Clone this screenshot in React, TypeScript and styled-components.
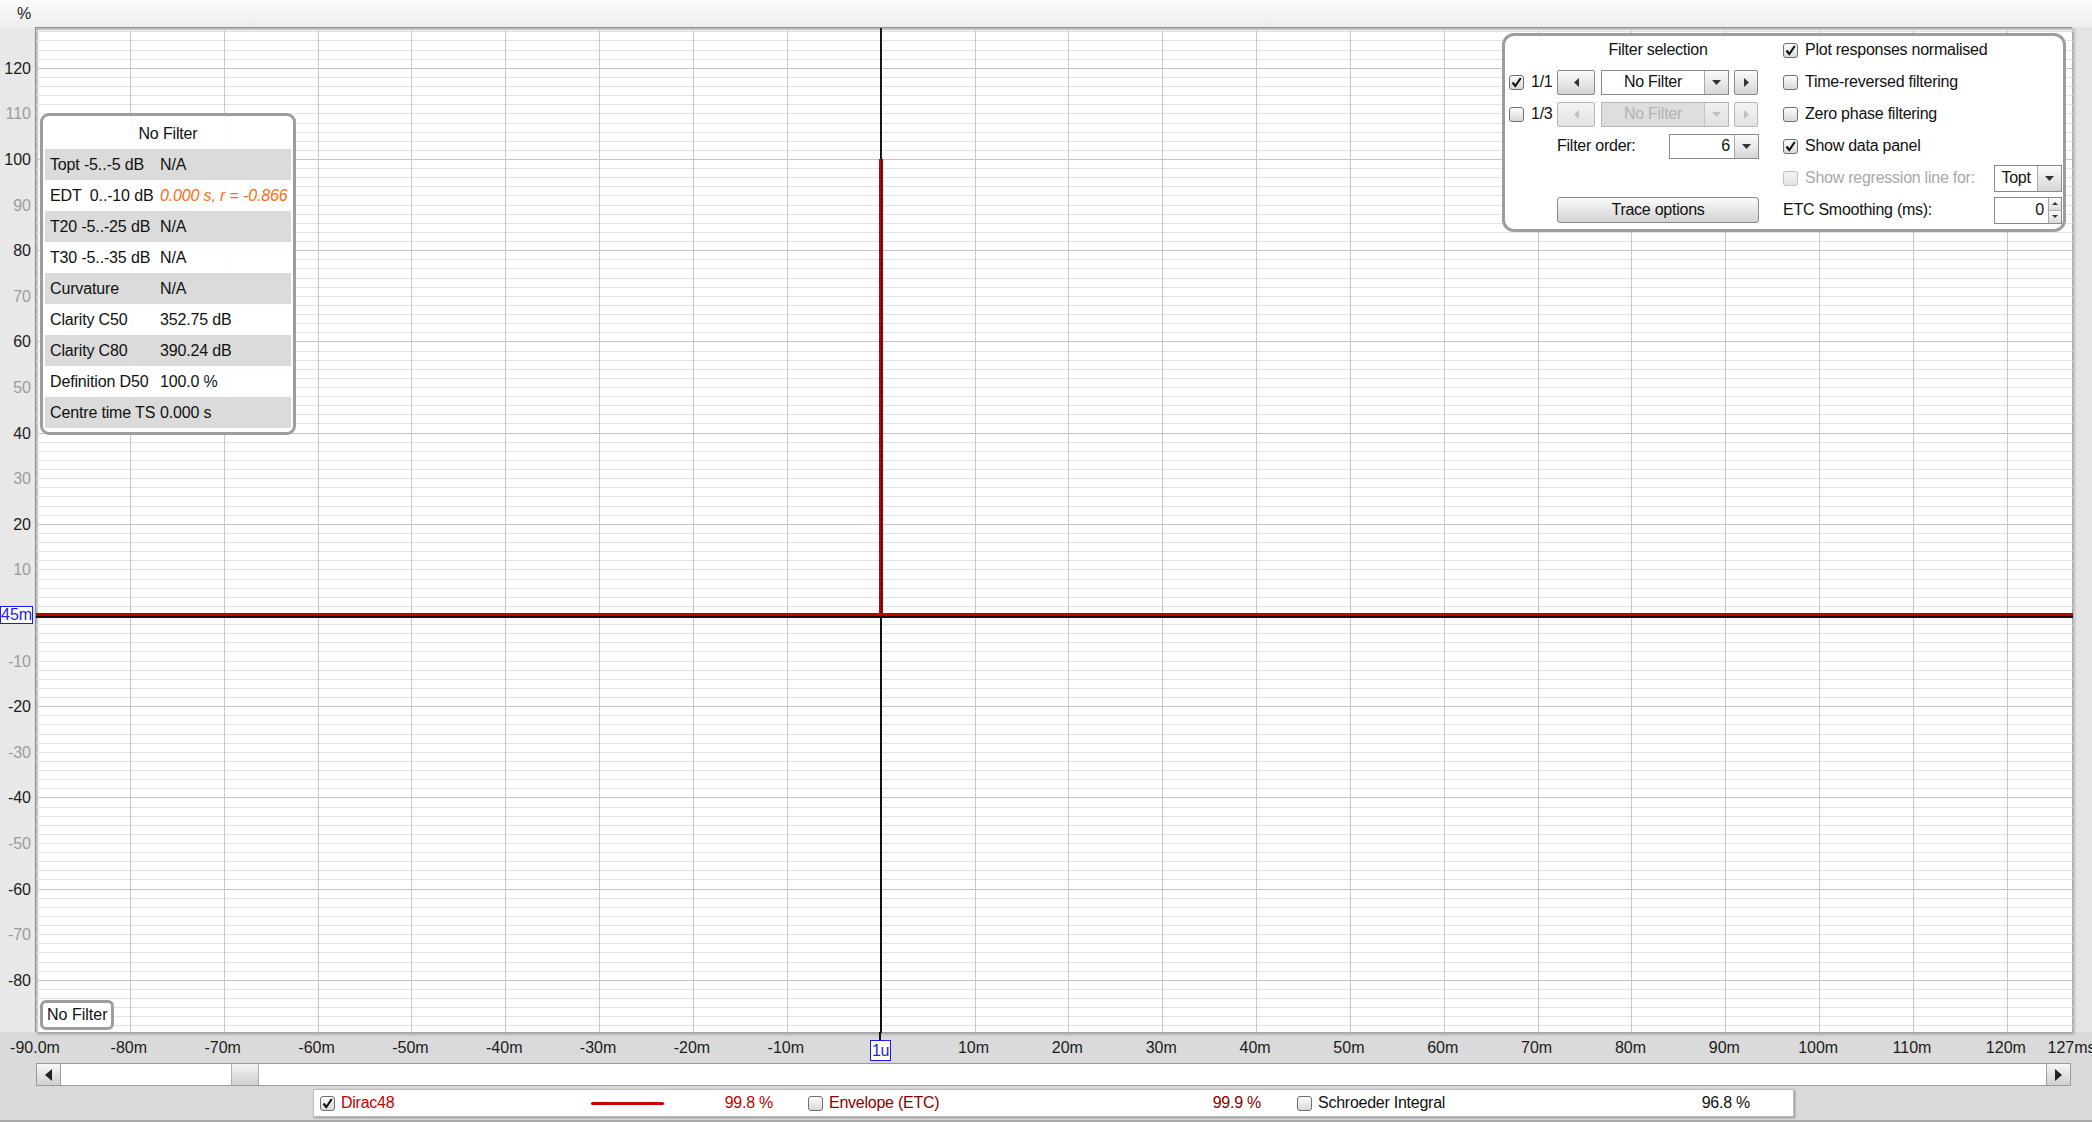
import React from 'react';
import styled, { createGlobalStyle } from 'styled-components';

const SANS = `"Liberation Sans", Arial, sans-serif`;

// chart scale
const PLOT_W = 2037;
const PLOT_H = 1005;
const PX_PER_MS = 9.385;
const MS_MIN = -90;
const ZERO_Y = 587;
const PX_PER_PCT = 4.56;
const xOf = (ms: number) => (ms - MS_MIN) * PX_PER_MS;
const yOf = (pct: number) => ZERO_Y - pct * PX_PER_PCT;

const GlobalStyle = createGlobalStyle`
  html, body { margin: 0; padding: 0; }
  body {
    width: 2092px;
    height: 1122px;
    overflow: hidden;
    background: #dadada;
    font-family: ${SANS};
    color: #111;
  }
`;

const Page = styled.div`
  width: 2092px;
  height: 1122px;
  display: flex;
  flex-direction: column;
  border-bottom: 2px solid #a8a8a8;
  box-sizing: border-box;
`;

const TopBand = styled.div`
  height: 27px;
  flex: none;
  background: linear-gradient(#fbfbfb, #eeeeee);
  position: relative;
`;

const Unit = styled.span`
  position: absolute;
  left: 17px;
  top: 5px;
  font-size: 16px;
  color: #222;
`;

const ChartRow = styled.div`
  height: ${PLOT_H}px;
  flex: none;
  display: flex;
`;

const YAxis = styled.div`
  width: 35px;
  flex: none;
  position: relative;
  background: #e8e8e8;
`;

const YLabel = styled.span<{ $major: boolean }>`
  position: absolute;
  right: 4px;
  margin-top: 2px;
  transform: translateY(-50%);
  font-size: 16px;
  line-height: 18px;
  color: ${({ $major }) => ($major ? '#1c1c1c' : '#9c9c9c')};
`;

const CursorTagY = styled.div`
  position: absolute;
  left: 0;
  top: 579px;
  width: 33px;
  height: 18px;
  box-sizing: border-box;
  border: 1px solid #1a1aff;
  background: #fff;
  color: #2222ee;
  font-size: 16px;
  line-height: 16px;
  text-align: right;
  overflow: hidden;
  padding-right: 1px;
`;

const PlotFrame = styled.div`
  width: ${PLOT_W}px;
  flex: none;
  position: relative;
  background: #fff;
  box-shadow: inset 2px 2px 2px rgba(0, 0, 0, 0.28), 2px 2px 3px rgba(0, 0, 0, 0.3);
  border-top: 1px solid #8f8f8f;
  border-left: 1px solid #8f8f8f;
  box-sizing: border-box;
`;

const GridSvg = styled.svg`
  position: absolute;
  left: 0;
  top: 0;
  display: block;
`;

const RightGutter = styled.div`
  flex: 1;
  background: #e4e4e4;
`;

/* ---------- data panel ---------- */

const DataPanel = styled.div`
  position: absolute;
  left: 4px;
  top: 85px;
  width: 256px;
  height: 322px;
  box-sizing: border-box;
  border: 3px solid #9d9d9d;
  border-radius: 9px;
  background: rgba(255, 255, 255, 0.9);
  padding: 0 2px 4px;
  font-size: 16px;
  letter-spacing: -0.15px;
`;

const DataTitle = styled.div`
  height: 33px;
  display: flex;
  align-items: center;
  justify-content: center;
  padding-top: 2px;
  box-sizing: border-box;
`;

const DataRow = styled.div<{ $shade: boolean }>`
  height: 31px;
  display: grid;
  grid-template-columns: 110px 1fr;
  align-items: center;
  padding-left: 5px;
  white-space: pre;
  background: ${({ $shade }) => ($shade ? 'rgba(205, 205, 205, 0.72)' : 'transparent')};
`;

const DataValue = styled.span<{ $warn?: boolean }>`
  color: ${({ $warn }) => ($warn ? '#ff6a10' : '#111')};
  font-style: ${({ $warn }) => ($warn ? 'italic' : 'normal')};
`;

const FilterBadge = styled.div`
  position: absolute;
  left: 4px;
  top: 972px;
  height: 30px;
  box-sizing: border-box;
  border: 3px solid #9d9d9d;
  border-radius: 6px;
  background: #fff;
  padding: 0 4px;
  display: flex;
  align-items: center;
  font-size: 16px;
`;

/* ---------- filter panel ---------- */

const FilterPanel = styled.div`
  position: absolute;
  right: 6px;
  top: 5px;
  width: 564px;
  height: 199px;
  box-sizing: border-box;
  border: 3px solid #9d9d9d;
  border-radius: 12px;
  background: #fff;
  padding: 0 1px 0 4px;
  display: grid;
  grid-template-columns: 250px 279px;
  column-gap: 24px;
  align-content: start;
  font-size: 16px;
  letter-spacing: -0.25px;
  white-space: nowrap;
  color: #111;
`;

const LeftCol = styled.div`
  display: grid;
  grid-template-columns: 48px 202px;
  grid-auto-rows: 32px;
  align-items: center;
  margin-top: -2px;
`;

const RightCol = styled.div`
  display: grid;
  grid-auto-rows: 32px;
  align-items: center;
  margin-top: -2px;
`;

const ColTitle = styled.div`
  grid-column: 2;
  text-align: center;
`;

const BandLabel = styled.label`
  display: flex;
  align-items: center;
  gap: 7px;
`;

const Stepper = styled.div`
  display: flex;
  align-items: center;
`;

const StepButton = styled.div<{ $w: number; $off?: boolean }>`
  width: ${({ $w }) => $w}px;
  height: 25px;
  box-sizing: border-box;
  border: 1px solid ${({ $off }) => ($off ? '#b8b8b8' : '#8a8a8a')};
  border-radius: 2px;
  background: ${({ $off }) =>
    $off ? 'linear-gradient(#f4f4f4, #e2e2e2)' : 'linear-gradient(#fbfbfb, #d4d4d4)'};
  display: flex;
  align-items: center;
  justify-content: center;
  flex: none;
`;

const Combo = styled.div<{ $w: number; $h?: number; $off?: boolean }>`
  width: ${({ $w }) => $w}px;
  height: ${({ $h }) => $h ?? 25}px;
  margin: 0 5px 0 6px;
  box-sizing: border-box;
  border: 1px solid ${({ $off }) => ($off ? '#b4b4b4' : '#8a8a8a')};
  background: ${({ $off }) => ($off ? '#dedede' : '#fff')};
  color: ${({ $off }) => ($off ? '#b2b2b2' : '#111')};
  display: flex;
  align-items: stretch;
  flex: none;
`;

const Field = styled(Combo)`
  margin: 0;
`;

const ComboText = styled.span<{ $align?: string }>`
  flex: 1;
  display: flex;
  align-items: center;
  justify-content: ${({ $align }) => ($align === 'right' ? 'flex-end' : 'center')};
  padding: 0 4px;
`;

const DropButton = styled.div<{ $off?: boolean }>`
  width: 23px;
  border-left: 1px solid ${({ $off }) => ($off ? '#c4c4c4' : '#a8a8a8')};
  background: ${({ $off }) =>
    $off ? 'linear-gradient(#f0f0f0, #e0e0e0)' : 'linear-gradient(#fbfbfb, #d6d6d6)'};
  display: flex;
  align-items: center;
  justify-content: center;
`;

const SpinButtons = styled.div`
  width: 12px;
  border-left: 1px solid #a8a8a8;
  display: flex;
  flex-direction: column;
`;

const SpinHalf = styled.div`
  flex: 1;
  background: linear-gradient(#fbfbfb, #dadada);
  display: flex;
  align-items: center;
  justify-content: center;
  & + & { border-top: 1px solid #b4b4b4; }
`;

const OrderRow = styled.div`
  grid-column: 2;
  display: flex;
  align-items: center;
  justify-content: space-between;
`;

const TraceButton = styled.div`
  grid-column: 2;
  height: 26px;
  box-sizing: border-box;
  border: 1px solid #8a8a8a;
  border-radius: 3px;
  background: linear-gradient(#fbfbfb, #d2d2d2);
  display: flex;
  align-items: center;
  justify-content: center;
`;

const OptionRow = styled.div<{ $off?: boolean }>`
  display: flex;
  align-items: center;
  gap: 7px;
  color: ${({ $off }) => ($off ? '#a8a8a8' : '#111')};
`;

const OptionRight = styled.div`
  margin-left: auto;
`;

/* ---------- checkbox ---------- */

const Box = styled.span<{ $off?: boolean }>`
  width: 15px;
  height: 15px;
  box-sizing: border-box;
  border: 1px solid ${({ $off }) => ($off ? '#c0c0c0' : '#707070')};
  border-radius: 3px;
  background: ${({ $off }) =>
    $off ? 'linear-gradient(#f4f4f4, #e4e4e4)' : 'linear-gradient(#fdfdfd, #d8d8d8)'};
  display: inline-flex;
  align-items: center;
  justify-content: center;
  flex: none;
`;

const Checkbox = ({ checked, off }: { checked?: boolean; off?: boolean }) => (
  <Box $off={off}>
    {checked && (
      <svg width="11" height="11" viewBox="0 0 11 11">
        <path d="M1.5 5.5 L4.3 9 L9.8 1" fill="none" stroke="#111" strokeWidth="2.2" />
      </svg>
    )}
  </Box>
);

const Tri = ({ dir, off }: { dir: 'left' | 'right' | 'down' | 'up'; off?: boolean }) => {
  const fill = off ? '#c0c0c0' : '#333';
  if (dir === 'left') return <svg width="5" height="9"><path d="M5 0 L0 4.5 L5 9 Z" fill={fill} /></svg>;
  if (dir === 'right') return <svg width="5" height="9"><path d="M0 0 L5 4.5 L0 9 Z" fill={fill} /></svg>;
  if (dir === 'up') return <svg width="6" height="3"><path d="M0 3 L3 0 L6 3 Z" fill={fill} /></svg>;
  return <svg width="9" height="5"><path d="M0 0 L9 0 L4.5 5 Z" fill={fill} /></svg>;
};

const SmallDown = () => <svg width="6" height="3"><path d="M0 0 L6 0 L3 3 Z" fill="#333" /></svg>;

const BigArrow = ({ dir }: { dir: 'left' | 'right' }) => (
  <svg width="7" height="12">
    <path d={dir === 'left' ? 'M7 0 L0 6 L7 12 Z' : 'M0 0 L7 6 L0 12 Z'} fill="#222" />
  </svg>
);

/* ---------- axes below ---------- */

const XAxis = styled.div`
  height: 31px;
  flex: none;
  position: relative;
`;

const XLabel = styled.span`
  position: absolute;
  top: 7px;
  transform: translateX(-50%);
  font-size: 16px;
  line-height: 18px;
  color: #1c1c1c;
  white-space: nowrap;
`;

const CursorStem = styled.div`
  position: absolute;
  left: 879px;
  top: 0;
  width: 2px;
  height: 8px;
  background: #111;
`;

const CursorTagX = styled.div`
  position: absolute;
  left: 870px;
  top: 8px;
  width: 21px;
  height: 21px;
  box-sizing: border-box;
  border: 1px solid #1a1aff;
  background: #fff;
  color: #2222ee;
  font-size: 16px;
  letter-spacing: -0.5px;
  line-height: 19px;
  text-align: center;
`;

const ScrollBar = styled.div`
  margin-left: 36px;
  width: 2035px;
  height: 23px;
  flex: none;
  box-sizing: border-box;
  border: 1px solid #9a9a9a;
  background: #fff;
  display: flex;
`;

const ScrollArrow = styled.div`
  width: 23px;
  flex: none;
  background: linear-gradient(#f8f8f8, #d0d0d0);
  display: flex;
  align-items: center;
  justify-content: center;
  border-right: 1px solid #a0a0a0;
  &:last-child { border-right: none; border-left: 1px solid #a0a0a0; }
`;

const ScrollTrack = styled.div`
  flex: 1;
  position: relative;
`;

const ScrollThumb = styled.div`
  position: absolute;
  top: 0;
  bottom: 0;
  width: 28px;
  box-sizing: border-box;
  border-left: 1px solid #b0b0b0;
  border-right: 1px solid #b0b0b0;
  background: linear-gradient(#f4f4f4, #cfcfcf);
`;

const Legend = styled.div`
  margin-left: 313px;
  margin-top: 3px;
  width: 1481px;
  height: 28px;
  flex: none;
  box-sizing: border-box;
  border: 1px solid #bdbdbd;
  box-shadow: 1px 1px 2px rgba(0, 0, 0, 0.35);
  background: #fff;
  display: grid;
  grid-template-columns: 488px 489px 1fr;
  font-size: 16px;
  letter-spacing: -0.25px;
`;

const LegendItem = styled.div<{ $color: string }>`
  display: grid;
  grid-template-columns: 15px 244px 73px 103px;
  column-gap: 6px;
  align-items: center;
  padding-left: 6px;
  color: ${({ $color }) => $color};
`;

const Swatch = styled.span<{ $color?: string }>`
  height: 3px;
  border-radius: 2px;
  background: ${({ $color }) => $color ?? 'transparent'};
`;

const Pct = styled.span`
  text-align: right;
`;

/* ---------- data ---------- */

const dataRows: { label: string; value: string; warn?: boolean }[] = [
  { label: 'Topt -5..-5 dB', value: 'N/A' },
  { label: 'EDT  0..-10 dB', value: '0.000 s, r = -0.866', warn: true },
  { label: 'T20 -5..-25 dB', value: 'N/A' },
  { label: 'T30 -5..-35 dB', value: 'N/A' },
  { label: 'Curvature', value: 'N/A' },
  { label: 'Clarity C50', value: '352.75 dB' },
  { label: 'Clarity C80', value: '390.24 dB' },
  { label: 'Definition D50', value: '100.0 %' },
  { label: 'Centre time TS', value: '0.000 s' },
];

const yTicks = [120, 110, 100, 90, 80, 70, 60, 50, 40, 30, 20, 10, -10, -20, -30, -40, -50, -60, -70, -80];

const xTicks: { ms: number; label: string }[] = [
  { ms: -90, label: '-90.0m' },
  ...[-80, -70, -60, -50, -40, -30, -20, -10, 10, 20, 30, 40, 50, 60, 70, 80, 90, 100, 110, 120].map((ms) => ({
    ms,
    label: `${ms}m`,
  })),
  { ms: 127, label: '127ms' },
];

const traces = [
  { name: 'Dirac48', color: '#c40000', checked: true, line: '#c40000', pct: '99.8 %' },
  { name: 'Envelope (ETC)', color: '#8a0000', checked: false, line: undefined, pct: '99.9 %' },
  { name: 'Schroeder Integral', color: '#111', checked: false, line: undefined, pct: '96.8 %' },
];

const PlotGrid = () => {
  const minor: number[] = [];
  const major: number[] = [];
  for (let p = -90; p <= 128; p += 2) {
    const y = Math.round(yOf(p)) + 0.5;
    if (p % 20 === 0) major.push(y);
    else minor.push(y);
  }
  const verticals: number[] = [];
  for (let ms = -80; ms <= 120; ms += 10) verticals.push(Math.round(xOf(ms)) + 0.5);
  const cx = Math.round(xOf(0));
  const top100 = Math.round(yOf(100));
  return (
    <GridSvg width={PLOT_W} height={PLOT_H}>
      {minor.map((y) => (
        <line key={`m${y}`} x1={0} x2={PLOT_W} y1={y} y2={y} stroke="#e2e2e2" strokeWidth={1} />
      ))}
      {major.map((y) => (
        <line key={`M${y}`} x1={0} x2={PLOT_W} y1={y} y2={y} stroke="#c4c4c4" strokeWidth={1} />
      ))}
      {verticals.map((x) => (
        <line key={`v${x}`} x1={x} x2={x} y1={0} y2={PLOT_H} stroke="#c8c8c8" strokeWidth={1} />
      ))}
      {/* cursor */}
      <rect x={0} y={588} width={PLOT_W} height={2} fill="#111" />
      <rect x={cx - 1} y={0} width={2} height={PLOT_H} fill="#111" />
      {/* impulse trace */}
      <rect x={0} y={585} width={PLOT_W} height={3} fill="#c00000" />
      <rect x={cx - 2} y={top100} width={4} height={588 - top100} fill="#c00000" />
      <rect x={cx} y={0} width={1} height={585} fill="#222" />
    </GridSvg>
  );
};

export default function App() {
  return (
    <>
      <GlobalStyle />
      <Page>
        <TopBand>
          <Unit>%</Unit>
        </TopBand>

        <ChartRow>
          <YAxis>
            {yTicks.map((p) => (
              <YLabel key={p} $major={p % 20 === 0} style={{ top: yOf(p) }}>
                {p}
              </YLabel>
            ))}
            <CursorTagY>45m</CursorTagY>
          </YAxis>

          <PlotFrame>
            <PlotGrid />

            <DataPanel>
              <DataTitle>No Filter</DataTitle>
              {dataRows.map((r, i) => (
                <DataRow key={r.label} $shade={i % 2 === 0}>
                  <span>{r.label}</span>
                  <DataValue $warn={r.warn}>{r.value}</DataValue>
                </DataRow>
              ))}
            </DataPanel>

            <FilterPanel>
              <LeftCol>
                <ColTitle>Filter selection</ColTitle>

                <BandLabel>
                  <Checkbox checked />
                  1/1
                </BandLabel>
                <Stepper>
                  <StepButton $w={38}><Tri dir="left" /></StepButton>
                  <Combo $w={128}>
                    <ComboText>No Filter</ComboText>
                    <DropButton><Tri dir="down" /></DropButton>
                  </Combo>
                  <StepButton $w={24}><Tri dir="right" /></StepButton>
                </Stepper>

                <BandLabel>
                  <Checkbox />
                  1/3
                </BandLabel>
                <Stepper>
                  <StepButton $w={38} $off><Tri dir="left" off /></StepButton>
                  <Combo $w={128} $off>
                    <ComboText>No Filter</ComboText>
                    <DropButton $off><Tri dir="down" off /></DropButton>
                  </Combo>
                  <StepButton $w={24} $off><Tri dir="right" off /></StepButton>
                </Stepper>

                <OrderRow>
                  <span>Filter order:</span>
                  <Field $w={90}>
                    <ComboText $align="right">6</ComboText>
                    <DropButton><Tri dir="down" /></DropButton>
                  </Field>
                </OrderRow>

                <span />
                <span />
                <span />

                <TraceButton>Trace options</TraceButton>
              </LeftCol>

              <RightCol>
                <OptionRow><Checkbox checked />Plot responses normalised</OptionRow>
                <OptionRow><Checkbox />Time-reversed filtering</OptionRow>
                <OptionRow><Checkbox />Zero phase filtering</OptionRow>
                <OptionRow><Checkbox checked />Show data panel</OptionRow>
                <OptionRow $off>
                  <Checkbox off />
                  Show regression line for:
                  <OptionRight>
                    <Field $w={68} $h={27}>
                      <ComboText>Topt</ComboText>
                      <DropButton><Tri dir="down" /></DropButton>
                    </Field>
                  </OptionRight>
                </OptionRow>
                <OptionRow>
                  ETC Smoothing (ms):
                  <OptionRight>
                    <Field $w={68} $h={27}>
                      <ComboText $align="right">0</ComboText>
                      <SpinButtons>
                        <SpinHalf><Tri dir="up" /></SpinHalf>
                        <SpinHalf><SmallDown /></SpinHalf>
                      </SpinButtons>
                    </Field>
                  </OptionRight>
                </OptionRow>
              </RightCol>
            </FilterPanel>

            <FilterBadge>No Filter</FilterBadge>
          </PlotFrame>

          <RightGutter />
        </ChartRow>

        <XAxis>
          {xTicks.map((t) => (
            <XLabel key={t.label} style={{ left: 35 + xOf(t.ms) }}>
              {t.label}
            </XLabel>
          ))}
          <CursorStem />
          <CursorTagX>1u</CursorTagX>
        </XAxis>

        <ScrollBar>
          <ScrollArrow><BigArrow dir="left" /></ScrollArrow>
          <ScrollTrack>
            <ScrollThumb style={{ left: 170 }} />
          </ScrollTrack>
          <ScrollArrow><BigArrow dir="right" /></ScrollArrow>
        </ScrollBar>

        <Legend>
          {traces.map((t) => (
            <LegendItem key={t.name} $color={t.color}>
              <Checkbox checked={t.checked} />
              <span>{t.name}</span>
              <Swatch $color={t.line} />
              <Pct>{t.pct}</Pct>
            </LegendItem>
          ))}
        </Legend>
      </Page>
    </>
  );
}
